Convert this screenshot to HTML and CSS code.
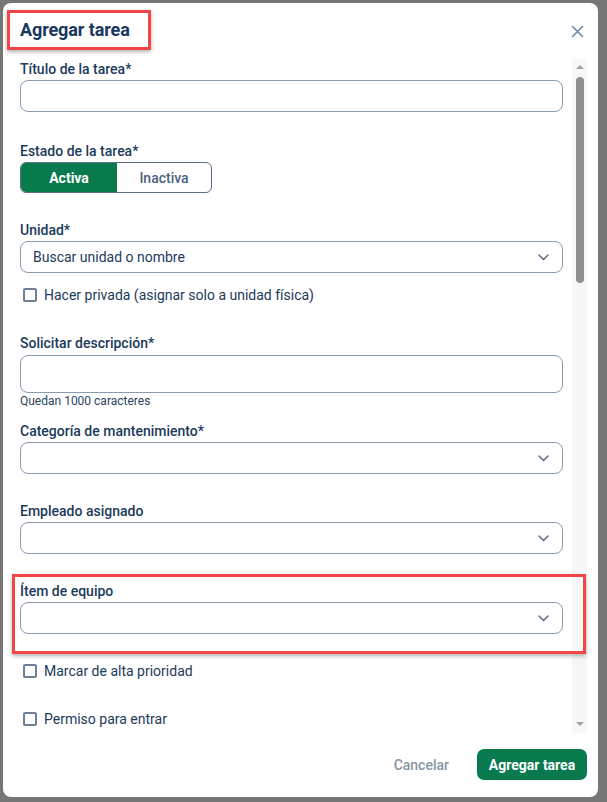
FILE: index.html
```html
<!DOCTYPE html>
<html lang="es">
<head>
<meta charset="utf-8">
<title>Agregar tarea</title>
<link rel="stylesheet" href="styles.css">
</head>
<body>
<div class="backdrop">
  <div class="dialog">
    <header class="dialog-header">
      <h2 class="dialog-title">Agregar tarea</h2>
      <button class="close-btn" aria-label="Cerrar">
        <svg width="13" height="13" viewBox="0 0 13 13"><path d="M1.5 1.5L11.5 11.5M11.5 1.5L1.5 11.5" stroke="#6d87a3" stroke-width="1.6" stroke-linecap="round"/></svg>
      </button>
    </header>
    <div class="dialog-body">
      <div class="form">
        <div class="field first">
          <label class="label">Título de la tarea*</label>
          <div class="input"></div>
        </div>
        <div class="field f-estado">
          <label class="label">Estado de la tarea*</label>
          <div class="toggle">
            <span class="toggle-opt active">Activa</span>
            <span class="toggle-opt">Inactiva</span>
          </div>
        </div>
        <div class="field f-unidad">
          <label class="label">Unidad*</label>
          <div class="input select">
            <span class="placeholder">Buscar unidad o nombre</span>
            <svg class="chev" width="11" height="7" viewBox="0 0 11 7"><path d="M1 1L5.5 5.5L10 1" fill="none" stroke="#5b6d82" stroke-width="1.5" stroke-linecap="round" stroke-linejoin="round"/></svg>
          </div>
        </div>
        <div class="check-row cb-privada">
          <span class="checkbox"></span>
          <span>Hacer privada (asignar solo a unidad física)</span>
        </div>
        <div class="field f-desc">
          <label class="label">Solicitar descripción*</label>
          <div class="input textarea"></div>
          <div class="hint">Quedan 1000 caracteres</div>
        </div>
        <div class="field f-cat">
          <label class="label">Categoría de mantenimiento*</label>
          <div class="input select">
            <span class="placeholder"></span>
            <svg class="chev" width="11" height="7" viewBox="0 0 11 7"><path d="M1 1L5.5 5.5L10 1" fill="none" stroke="#5b6d82" stroke-width="1.5" stroke-linecap="round" stroke-linejoin="round"/></svg>
          </div>
        </div>
        <div class="field f-std">
          <label class="label">Empleado asignado</label>
          <div class="input select">
            <span class="placeholder"></span>
            <svg class="chev" width="11" height="7" viewBox="0 0 11 7"><path d="M1 1L5.5 5.5L10 1" fill="none" stroke="#5b6d82" stroke-width="1.5" stroke-linecap="round" stroke-linejoin="round"/></svg>
          </div>
        </div>
        <div class="field f-std">
          <label class="label">Ítem de equipo</label>
          <div class="input select">
            <span class="placeholder"></span>
            <svg class="chev" width="11" height="7" viewBox="0 0 11 7"><path d="M1 1L5.5 5.5L10 1" fill="none" stroke="#5b6d82" stroke-width="1.5" stroke-linecap="round" stroke-linejoin="round"/></svg>
          </div>
        </div>
        <div class="check-row cb-alta">
          <span class="checkbox"></span>
          <span>Marcar de alta prioridad</span>
        </div>
        <div class="check-row cb-permiso">
          <span class="checkbox"></span>
          <span>Permiso para entrar</span>
        </div>
      </div>
      <div class="scrollbar">
        <span class="arrow up"></span>
        <span class="thumb"></span>
        <span class="arrow down"></span>
      </div>
    </div>
    <footer class="dialog-footer">
      <button class="btn-cancel">Cancelar</button>
      <button class="btn-primary">Agregar tarea</button>
    </footer>
    <div class="highlight-equipo"></div>
  </div>
</div>
</body>
</html>
```
FILE: styles.css
```css
* { box-sizing: border-box; }
html, body { margin: 0; padding: 0; }
body {
  background: #767676;
  font-family: Roboto, "Liberation Sans", Arial, sans-serif;
  color: #1c3a5c;
}
.backdrop {
  width: 607px;
  height: 802px;
  padding: 3px 9px 5px 3px;
}
.dialog {
  position: relative;
  width: 595px;
  height: 794px;
  background: #fff;
  border-radius: 8px;
  display: flex;
  flex-direction: column;
  overflow: hidden;
}
.dialog-header {
  height: 57px;
  flex: none;
  display: flex;
  align-items: flex-start;
  justify-content: space-between;
  padding: 7px 14px 0 4px;
}
.dialog-title {
  margin: 0;
  width: 144px;
  height: 40px;
  border: 3px solid #f24545;
  box-shadow: 0 2px 4px rgba(0,0,0,0.3);
  padding: 0 0 0 10px;
  font-size: 18px;
  font-weight: 700;
  line-height: 34px;
  color: #17375c;
  letter-spacing: -0.1px;
}
.close-btn {
  margin-top: 15px;
  border: 0;
  background: none;
  padding: 0;
  width: 13px;
  height: 13px;
  display: flex;
}
.dialog-body {
  flex: none;
  height: 674px;
  display: flex;
}
.form {
  width: 560px;
  padding-left: 17px;
  overflow: hidden;
}
.field { display: flex; flex-direction: column; }
.label {
  font-size: 14px;
  font-weight: 500;
  line-height: 18px;
  color: #1c3a5c;
}
.input {
  height: 32px;
  margin-top: 2px;
  border: 1px solid #8a9ab0;
  border-radius: 8px;
  background: #fff;
}
.first { margin-top: 0; }
.f-estado { margin-top: 30px; }
.f-unidad { margin-top: 28px; }
.f-desc { margin-top: 29px; }
.f-cat { margin-top: 14px; }
.f-std { margin-top: 28px; }
.textarea { height: 38px; margin-top: 3px; }
.hint {
  margin-top: 1px;
  font-size: 12px;
  line-height: 14px;
  color: #2b4461;
}
.toggle {
  margin-top: 2px;
  width: 192px;
  height: 31px;
  border: 1px solid #5d6f86;
  border-radius: 6px;
  display: flex;
  overflow: hidden;
}
.toggle-opt {
  flex: 1;
  display: flex;
  align-items: center;
  justify-content: center;
  font-size: 14px;
  font-weight: 500;
  color: #4c627c;
}
.toggle-opt.active {
  flex: none;
  width: 96px;
  background: #087a4e;
  color: #fff;
  font-weight: 700;
}
.select {
  display: flex;
  align-items: center;
  justify-content: space-between;
  padding: 0 13px 0 12px;
}
.placeholder {
  font-size: 14px;
  color: #1c3a5c;
}
.chev { flex: none; }
.check-row {
  display: flex;
  align-items: center;
  gap: 7px;
  height: 20px;
  padding-left: 3px;
  font-size: 14px;
  color: #1c3a5c;
}
.cb-privada { margin-top: 12px; }
.cb-alta { margin-top: 27px; }
.cb-permiso { margin-top: 28px; }
.checkbox {
  width: 14px;
  height: 14px;
  border: 2px solid #6f8197;
  border-radius: 2px;
  flex: none;
}
.scrollbar {
  margin-left: 9px;
  width: 15px;
  height: 674px;
  margin-top: -1px;
  background: #f7f7f7;
  display: flex;
  flex-direction: column;
  align-items: center;
}
.arrow {
  width: 0;
  height: 0;
  border-left: 4px solid transparent;
  border-right: 4px solid transparent;
}
.arrow.up {
  margin-top: 6px;
  border-bottom: 4px solid #a3a3a3;
}
.arrow.down {
  margin-top: auto;
  margin-bottom: 7px;
  border-top: 4px solid #a3a3a3;
}
.thumb {
  margin-top: 8px;
  width: 8px;
  height: 206px;
  border-radius: 4px;
  background: #8f8f8f;
}
.dialog-footer {
  flex: 1;
  display: flex;
  align-items: center;
  justify-content: flex-end;
  gap: 28px;
  padding: 0 11px 2px 0;
}
.btn-cancel {
  border: 0;
  background: none;
  padding: 0;
  font-family: inherit;
  font-size: 14px;
  font-weight: 500;
  color: #8895a4;
}
.btn-primary {
  width: 110px;
  height: 31px;
  border: 0;
  border-radius: 7px;
  background: #087a4e;
  color: #fff;
  font-family: inherit;
  font-size: 14px;
  font-weight: 700;
  padding: 0;
}
.highlight-equipo {
  position: absolute;
  left: 9px;
  top: 571px;
  width: 574px;
  height: 80px;
  border: 3px solid #f24545;
  box-shadow: 0 2px 4px rgba(0,0,0,0.3);
  pointer-events: none;
}
```
